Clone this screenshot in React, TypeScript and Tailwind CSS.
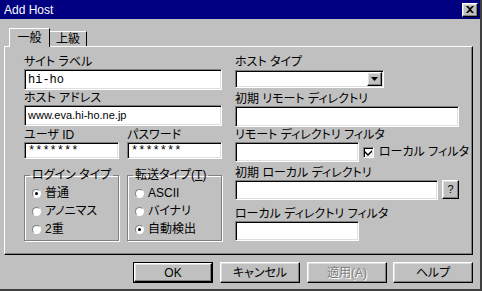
import React from "react";

const font =
  "font-['Liberation_Sans','Noto_Sans_CJK_JP',sans-serif] [font-feature-settings:'palt']";

const sunken =
  "border border-t-[#808080] border-l-[#808080] border-r-white border-b-white shadow-[inset_1px_1px_0_#000,inset_-1px_-1px_0_#dfdfdf] bg-white";

const raised =
  "border border-t-white border-l-white border-r-black border-b-black shadow-[inset_-1px_-1px_0_#808080,inset_1px_1px_0_#dfdfdf] bg-[#c0c0c0]";

const Label = ({ children, className = "" }: { children: React.ReactNode; className?: string }) => (
  <div className={`h-[13px] text-[12px] leading-[13px] text-black whitespace-nowrap ${className}`}>
    {children}
  </div>
);

const Input = ({ value, className = "", mono }: { value?: string; className?: string; mono?: boolean }) => (
  <div
    className={`${sunken} flex shrink-0 items-center pl-[3px] text-[11px] text-black ${
      mono ? "font-['Liberation_Mono',monospace] text-[12px]" : ""
    } ${className}`}
  >
    {value}
  </div>
);

const Radio = ({ label, checked }: { label: React.ReactNode; checked?: boolean }) => (
  <div className="flex h-[18px] items-center pl-[7px]">
    <div className="flex h-[9px] w-[9px] items-center justify-center rounded-full border border-t-[#808080] border-l-[#808080] border-r-white border-b-white bg-white">
      {checked && <div className="h-[3px] w-[3px] rounded-full bg-black" />}
    </div>
    <span className="ml-[4px] text-[12px] leading-[13px]">{label}</span>
  </div>
);

const Group = ({ title, children }: { title: React.ReactNode; children: React.ReactNode }) => (
  <fieldset className="h-[72px] w-[95px] border border-[#808080] shadow-[inset_1px_1px_0_#fff,1px_1px_0_#fff] pt-[2px]">
    <legend className="ml-[5px] px-[2px] text-[12px] leading-[13px]">{title}</legend>
    {children}
  </fieldset>
);

const Button = ({
  children,
  def,
  disabled,
  className = "",
}: {
  children: React.ReactNode;
  def?: boolean;
  disabled?: boolean;
  className?: string;
}) => (
  <div className={`h-[21px] w-[80px] ${def ? "border border-black" : ""} ${className}`}>
    <div
      className={`${raised} flex h-full w-full items-center justify-center text-[12px] ${
        disabled ? "text-[#808080] [text-shadow:1px_1px_0_#fff]" : "text-black"
      }`}
    >
      {children}
    </div>
  </div>
);

export default function App() {
  return (
    <div
      className={`${font} flex h-[291px] w-[482px] flex-col border-r-2 border-b-2 border-r-[#404040] border-b-[#404040] bg-[#c0c0c0] text-black`}
    >
      {/* title bar */}
      <div className="flex h-[19px] items-center justify-between bg-[#000080] pl-[4px] pr-[2px]">
        <span className="font-['Liberation_Sans',sans-serif] text-[12px] text-white">Add Host</span>
        <div className={`${raised} flex h-[14px] w-[16px] items-center justify-center`}>
          <svg width="8" height="7" viewBox="0 0 8 7">
            <path d="M0 0h2l2 2 2-2h2L5 3.5 8 7H6L4 5 2 7H0l3-3.5z" fill="#000" />
          </svg>
        </div>
      </div>

      {/* tabs */}
      <div className="ml-[9px] mt-[9px] flex h-[18px] items-end">
        <div className="relative z-10 -mb-[1px] flex h-[19px] w-[41px] items-center justify-center border-l border-t border-r border-t-white border-l-white border-r-black bg-[#c0c0c0] text-[12px]">
          一般
        </div>
        <div className="flex h-[15px] w-[37px] items-center justify-center border-t border-r border-t-white border-r-black text-[12px]">
          上級
        </div>
      </div>

      {/* panel */}
      <div className="ml-[4px] flex h-[209px] w-[469px] border border-t-white border-l-white border-r-black border-b-black pl-[19px] pt-[9px] shadow-[inset_-1px_-1px_0_#808080]">
        {/* left column */}
        <div className="flex w-[198px] flex-col">
          <Label>サイト ラベル</Label>
          <Input value="hi-ho" mono className="h-[21px]" />
          <Label className="mt-[2px]">ホスト アドレス</Label>
          <Input value="www.eva.hi-ho.ne.jp" className="h-[21px]" />
          <div className="mt-[3px] flex justify-between">
            <div className="flex w-[95px] flex-col">
              <Label>ユーザ ID</Label>
              <Input value="*******" mono className="h-[17px]" />
            </div>
            <div className="flex w-[95px] flex-col">
              <Label>パスワード</Label>
              <Input value="*******" mono className="h-[17px]" />
            </div>
          </div>
          <div className="mt-[10px] flex justify-between">
            <Group title="ログイン タイプ">
              <Radio label="普通" checked />
              <Radio label="アノニマス" />
              <Radio label="2重" />
            </Group>
            <Group
              title={
                <>
                  転送タイプ(<u>T</u>)
                </>
              }
            >
              <Radio label="ASCII" />
              <Radio label="バイナリ" />
              <Radio label="自動検出" checked />
            </Group>
          </div>
        </div>

        {/* right column */}
        <div className="ml-[13px] flex w-[224px] flex-col">
          <Label>ホスト タイプ</Label>
          <div className={`${sunken} mt-[1px] flex h-[18px] w-[149px] items-center justify-end pr-[1px]`}>
            <div className={`${raised} flex h-[14px] w-[15px] items-center justify-center`}>
              <svg width="7" height="4" viewBox="0 0 7 4">
                <path d="M0 0h7L3.5 4z" fill="#000" />
              </svg>
            </div>
          </div>
          <Label className="mt-[5px]">初期 リモート ディレクトリ</Label>
          <Input className="h-[21px]" />
          <Label className="mt-[2px]">リモート ディレクトリ フィルタ</Label>
          <div className="flex h-[20px] items-center whitespace-nowrap">
            <Input className="h-[20px] w-[124px]" />
            <div className={`${sunken} ml-[4px] flex h-[11px] w-[11px] shrink-0 items-center justify-center`}>
              <svg width="7" height="7" viewBox="0 0 7 7">
                <path d="M0 2l0 2 3 3 4-4V1L3 5z" fill="#000" />
              </svg>
            </div>
            <span className="ml-[5px] text-[12px]">ローカル フィルタ</span>
          </div>
          <Label className="mt-[5px]">初期 ローカル ディレクトリ</Label>
          <div className="flex items-start">
            <Input className="h-[20px] w-[203px]" />
            <div className={`${raised} ml-[4px] flex h-[19px] w-[17px] items-center justify-center text-[11px]`}>
              ?
            </div>
          </div>
          <Label className="mt-[8px]">ローカル ディレクトリ フィルタ</Label>
          <Input className="h-[20px] w-[124px]" />
        </div>
      </div>

      {/* buttons */}
      <div className="ml-[133px] mt-[7px] flex">
        <Button def>OK</Button>
        <Button className="ml-[7px]">キャンセル</Button>
        <Button className="ml-[7px]" disabled>
          適用(A)
        </Button>
        <Button className="ml-[6px] w-[79px]">ヘルプ</Button>
      </div>
    </div>
  );
}
